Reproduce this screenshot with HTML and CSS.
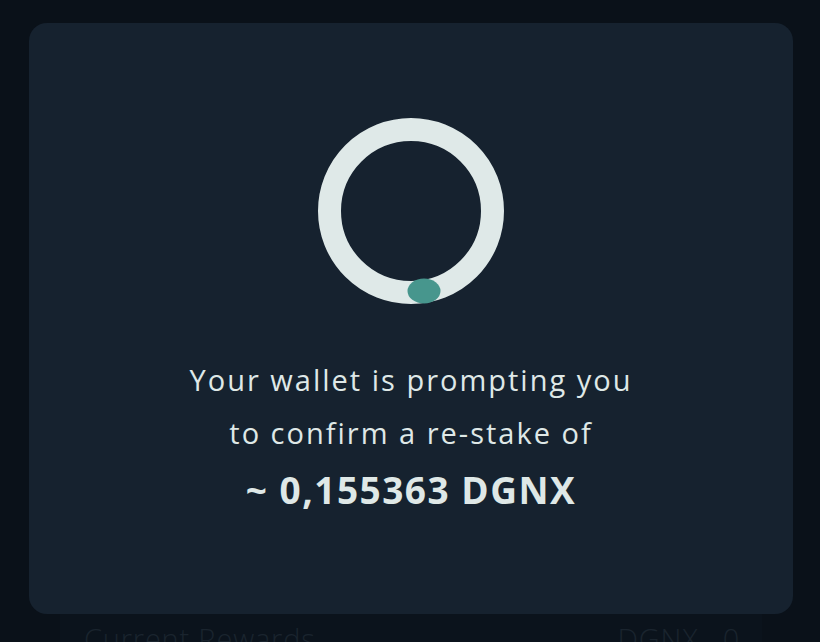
FILE: index.html
```html
<!DOCTYPE html>
<html lang="en">
<head>
<meta charset="utf-8">
<title>Re-stake</title>
<link rel="stylesheet" href="styles.css">
</head>
<body>
<main class="page">
  <section class="bg-card">
    <div class="bg-row">
      <span class="bg-label">Current Rewards</span>
      <span class="bg-value">DGNX<span class="bg-num">0</span></span>
    </div>
  </section>
</main>
<div class="overlay">
  <div class="modal">
    <div class="spinner">
      <svg width="188" height="188" viewBox="0 0 188 188">
        <circle cx="94" cy="94" r="81.5" fill="none" stroke="#dfe9e8" stroke-width="23"/>
        <ellipse cx="107" cy="174" rx="16.5" ry="12.5" fill="#47968d"/>
      </svg>
    </div>
    <p class="msg">Your wallet is prompting you<br>to confirm a re-stake of</p>
    <p class="amount">~ 0,155363 DGNX</p>
  </div>
</div>
</body>
</html>
```
FILE: styles.css
```css
* { box-sizing: border-box; }
html, body { margin: 0; padding: 0; }
body {
  width: 820px;
  height: 642px;
  overflow: hidden;
  background: #0a1119;
  font-family: "Open Sans", "Liberation Sans", sans-serif;
  position: relative;
}
.page {
  padding: 0 58px 0 60px;
  height: 642px;
  display: flex;
  flex-direction: column;
  justify-content: flex-end;
}
.bg-card {
  background: #0b131c;
  height: 40px;
  padding: 0 22px 0 24px;
}
.bg-row {
  display: flex;
  justify-content: space-between;
  padding-top: 17px;
  font-size: 29px;
  line-height: 40px;
  color: #1a242e;
  font-weight: 300;
  letter-spacing: 0.8px;
}
.bg-num { margin-left: 24px; }
.overlay {
  position: absolute;
  inset: 0;
  display: flex;
  align-items: flex-start;
  justify-content: center;
  padding-top: 23px;
}
.modal {
  width: 764px;
  height: 591px;
  margin-left: 2px;
  background: #16222f;
  border-radius: 18px;
  display: flex;
  flex-direction: column;
  align-items: center;
  padding-top: 94px;
  color: #dfe8e7;
}
.spinner { width: 188px; height: 188px; }
.spinner svg { display: block; }
.msg {
  margin: 48px 0 0;
  text-align: center;
  font-size: 29px;
  line-height: 53px;
  letter-spacing: 2px;
  font-weight: 400;
}
.amount {
  margin: 7px 0 0;
  font-size: 37px;
  line-height: 48px;
  font-weight: 700;
  letter-spacing: 1.5px;
}
```
